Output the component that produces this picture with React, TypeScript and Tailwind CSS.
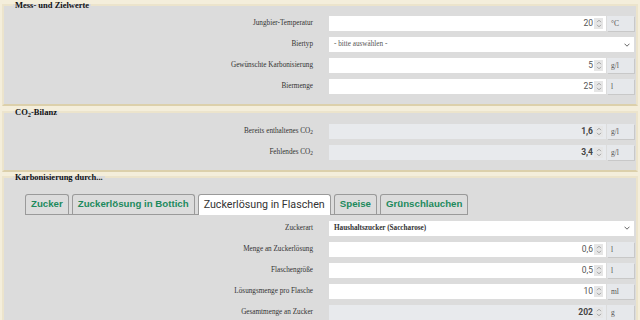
import type { ReactNode } from "react";

/**
 * Karbonisierungsrechner
 * - three fieldsets (Mess- und Zielwerte, CO2-Bilanz, Karbonisierung)
 * - label column on the left, inputs with unit boxes on the right
 */

const serif = "font-['Liberation_Serif','Times_New_Roman',serif]";
const sans = "font-['Roboto','Liberation_Sans',sans-serif]";

const Spinner = () => (
	<div className="w-[9px] h-[11px] bg-[#e6e6e6] flex items-center justify-center">
		<svg width="6" height="9" viewBox="0 0 6 9" fill="none" stroke="#9a9a9a" strokeWidth="0.9">
			<path d="M1 3.2 L3 1.2 L5 3.2" />
			<path d="M1 5.8 L3 7.8 L5 5.8" />
		</svg>
	</div>
);

const Chevron = () => (
	<svg width="6" height="4" viewBox="0 0 6 4" fill="none" stroke="#666" strokeWidth="1">
		<path d="M0.5 0.7 L3 3.2 L5.5 0.7" />
	</svg>
);

const Row = ({ label, children }: { label: ReactNode; children: ReactNode }) => (
	<div className="flex items-center h-[15px]">
		<div className={`w-[309px] shrink-0 text-right text-[7.2px] leading-[15px] text-[#333] ${serif}`}>
			{label}
		</div>
		<div className="ml-[16px] mr-[2px] flex-1 flex h-full">{children}</div>
	</div>
);

const NumberField = ({ value, unit, readOnly }: { value: string; unit: string; readOnly?: boolean }) => (
	<>
		<div
			className={`flex-1 flex items-center justify-end gap-[1px] pr-[3px] ${readOnly ? "bg-[#e8eaed] font-bold text-[#444]" : "bg-white text-[#555]"
				} ${sans} text-[8.5px]`}
		>
			<span>{value}</span>
			<Spinner />
		</div>
		<div
			className={`w-[27px] ml-[1px] bg-[#e6e8eb] shadow-[1px_1px_0_#c8c8c8] pl-[4px] flex items-center text-[7.5px] text-[#555] ${serif}`}
		>
			{unit}
		</div>
	</>
);

const SelectField = ({ text, bold }: { text: string; bold?: boolean }) => (
	<div
		className={`flex-1 bg-white flex items-center justify-between pl-[5px] pr-[4px] text-[7.2px] ${serif} ${bold ? "font-bold text-[#333]" : "text-[#555]"
			}`}
	>
		<span>{text}</span>
		<Chevron />
	</div>
);

const Box = ({ title, className, children }: { title: ReactNode; className: string; children: ReactNode }) => (
	<fieldset
		className={`mx-[2px] border-2 border-[#ece4cc] border-b-[#dcd0ab] bg-[#dcdcdc] ${className}`}
	>
		<legend className={`ml-[9px] px-[2px] text-[8.5px] leading-[10px] font-bold text-[#111] ${serif}`}>
			{title}
		</legend>
		{children}
	</fieldset>
);

const tabs = ["Zucker", "Zuckerlösung in Bottich", "Zuckerlösung in Flaschen", "Speise", "Grünschlauchen"];

export default function App() {
	return (
		<div className="w-[640px] h-[320px] overflow-hidden bg-[#f4eedb]">
			{/* ================= MESS- UND ZIELWERTE ================= */}
			<Box title="Mess- und Zielwerte" className="pt-[6px] pb-[10px]">
				<div className="flex flex-col gap-[6px]">
					<Row label="Jungbier-Temperatur">
						<NumberField value="20" unit="°C" />
					</Row>
					<Row label="Biertyp">
						<SelectField text="- bitte auswählen -" />
					</Row>
					<Row label="Gewünschte Karbonisierung">
						<NumberField value="5" unit="g/l" />
					</Row>
					<Row label="Biermenge">
						<NumberField value="25" unit="l" />
					</Row>
				</div>
			</Box>

			{/* ================= CO2-BILANZ ================= */}
			<Box
				title={
					<>
						CO<sub>2</sub>-Bilanz
					</>
				}
				className="mt-[1px] pt-[7px] pb-[10px]"
			>
				<div className="flex flex-col gap-[6px]">
					<Row
						label={
							<>
								Bereits enthaltenes CO<sub>2</sub>
							</>
						}
					>
						<NumberField value="1,6" unit="g/l" readOnly />
					</Row>
					<Row
						label={
							<>
								Fehlendes CO<sub>2</sub>
							</>
						}
					>
						<NumberField value="3,4" unit="g/l" readOnly />
					</Row>
				</div>
			</Box>

			{/* ================= KARBONISIERUNG ================= */}
			<Box title="Karbonisierung durch..." className="pt-[7px] pb-[10px]">
				<div className="ml-[21px] inline-flex items-end gap-[3px] border-b border-[#9a9a9a] h-[21px]">
					{tabs.map((t) =>
						t === "Zuckerlösung in Flaschen" ? (
							<div
								key={t}
								className={`h-[21px] -mb-px px-[5px] bg-white border border-b-0 border-[#9a9a9a] rounded-t-[3px] flex items-center text-[10.7px] text-[#333] ${sans}`}
							>
								{t}
							</div>
						) : (
							<div
								key={t}
								className="h-[20px] px-[5px] border border-b-0 border-[#9a9a9a] rounded-t-[3px] flex items-center text-[9.7px] font-bold text-[#1d8a5c] font-['Liberation_Sans',Arial,sans-serif]"
							>
								{t}
							</div>
						)
					)}
				</div>
				<div className="mt-[6px] flex flex-col gap-[6px]">
					<Row label="Zuckerart">
						<SelectField text="Haushaltszucker (Saccharose)" bold />
					</Row>
					<Row label="Menge an Zuckerlösung">
						<NumberField value="0,6" unit="l" />
					</Row>
					<Row label="Flaschengröße">
						<NumberField value="0,5" unit="l" />
					</Row>
					<Row label="Lösungsmenge pro Flasche">
						<NumberField value="10" unit="ml" />
					</Row>
					<Row label="Gesamtmenge an Zucker">
						<NumberField value="202" unit="g" readOnly />
					</Row>
				</div>
			</Box>
		</div>
	);
}
